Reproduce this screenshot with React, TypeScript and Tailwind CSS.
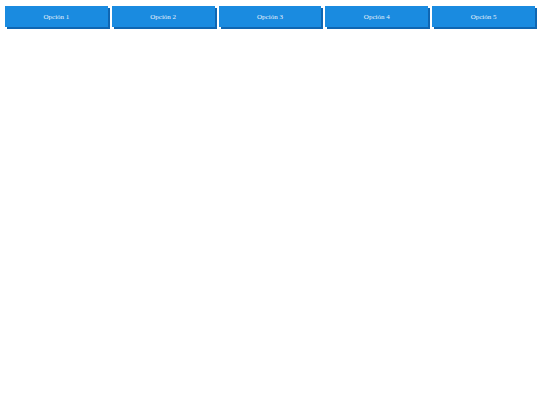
export default function App() {
  const items = ["Opción 1", "Opción 2", "Opción 3", "Opción 4", "Opción 5"];
  return (
    <div className="w-[540px] h-[405px] bg-white" style={{ fontFamily: '"Liberation Serif", serif' }}>
      <div className="flex gap-[4px] px-[5px] pt-[6px]">
        {items.map((t) => (
          <div
            key={t}
            className="flex-1 h-[21px] pt-[1px] flex items-center justify-center bg-[#1a8be0] text-[#e8f2fb] text-[7px] shadow-[2px_2px_0_#0f66b2]"
          >
            {t}
          </div>
        ))}
      </div>
    </div>
  );
}
